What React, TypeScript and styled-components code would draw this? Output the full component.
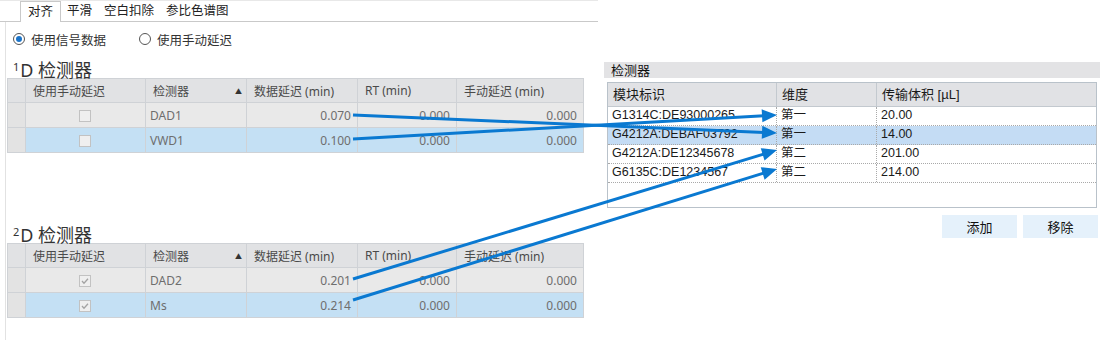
import styled, { createGlobalStyle } from 'styled-components';

const GlobalStyle = createGlobalStyle`
  html, body {
    margin: 0;
    padding: 0;
    background: #fff;
  }
  body {
    font-family: 'Noto Sans', 'Noto Sans CJK SC', sans-serif;
  }
`;

const Page = styled.div`
  position: relative;
  display: flex;
  width: 1100px;
  height: 340px;
  overflow: hidden;
  background: #fff;
`;

const LeftPanel = styled.div`
  width: 598px;
  display: flex;
  flex-direction: column;
`;

const TabStrip = styled.div`
  display: flex;
  align-items: flex-end;
  height: 22px;
  box-sizing: border-box;
  padding-left: 20px;
  border-top: 1px solid #e8e8e8;
  border-bottom: 1px solid #c9c9c9;
`;

const Tab = styled.div<{ $active?: boolean }>`
  box-sizing: border-box;
  height: 20px;
  padding: 0 6px;
  font-size: 12.5px;
  line-height: 19px;
  color: #222;
  white-space: nowrap;
  ${({ $active }) =>
    $active &&
    `
    height: 21px;
    margin-bottom: -1px;
    padding: 0 7px;
    background: #fff;
    border: 1px solid #c9c9c9;
    border-bottom: none;
  `}
`;

const Content = styled.div`
  flex: 1;
  margin-left: 5px;
  padding-left: 1px;
  border-left: 1px solid #e2e2e2;
`;

const RadioRow = styled.div`
  display: flex;
  align-items: center;
  height: 16px;
  margin-top: 9px;
  padding-left: 6px;
`;

const RadioItem = styled.label`
  display: flex;
  align-items: center;
  gap: 6px;
  width: 126px;
  font-size: 12.5px;
  color: #333;
  white-space: nowrap;
`;

const RadioDot = styled.span<{ $checked?: boolean }>`
  position: relative;
  box-sizing: border-box;
  width: 12px;
  height: 12px;
  border-radius: 50%;
  border: 1px solid #555;
  background: #fff;
  &::after {
    content: '';
    display: ${({ $checked }) => ($checked ? 'block' : 'none')};
    position: absolute;
    left: 2px;
    top: 2px;
    width: 6px;
    height: 6px;
    border-radius: 50%;
    background: #1b74c9;
  }
`;

const Heading = styled.div<{ $gap: number }>`
  height: 23px;
  margin-top: ${({ $gap }) => $gap}px;
  padding-left: 6px;
  font-size: 18px;
  line-height: 23px;
  color: #333;
  white-space: nowrap;
  sup {
    font-size: 11px;
    vertical-align: 6px;
    margin-right: 1px;
  }
`;

const DataTable = styled.table`
  border-collapse: collapse;
  table-layout: fixed;
  width: 576px;
  font-size: 12px;
`;

const HeadCell = styled.th`
  height: 23px;
  padding: 0 7px;
  text-align: left;
  font-weight: normal;
  color: #4a4a4a;
  background: #e1e2e4;
  border: 1px solid #cfd2d6;
  white-space: nowrap;
  position: relative;
`;

const SortMark = styled.span`
  position: absolute;
  right: 4px;
  top: 7px;
  font-size: 7px;
  color: #333;
`;

const Row = styled.tr<{ $selected?: boolean }>`
  background: ${({ $selected }) => ($selected ? '#c4e0f4' : '#e9e9e9')};
`;

const RowHeader = styled.td`
  background: #e3e3e3;
  border: 1px solid #cfd2d6;
`;

const Cell = styled.td<{ $align?: 'left' | 'right' | 'center' }>`
  height: 24px;
  padding: 0 6px 0 4px;
  text-align: ${({ $align }) => $align || 'left'};
  color: #6e6e6e;
  border: 1px solid #cfd2d6;
  white-space: nowrap;
`;

const Check = styled.span`
  display: inline-block;
  box-sizing: border-box;
  width: 12px;
  height: 12px;
  vertical-align: middle;
  border: 1px solid #c2c2c2;
  background: #efefef;
  svg {
    display: block;
  }
`;

const RightPanel = styled.div`
  flex: 1;
  padding: 62px 0 0 6px;
  display: flex;
  flex-direction: column;
`;

const GroupBar = styled.div`
  height: 16px;
  padding-left: 7px;
  background: #e3e3e5;
  font-size: 13px;
  line-height: 16px;
  color: #111;
`;

const GridBox = styled.div`
  box-sizing: border-box;
  height: 126px;
  margin: 4px 3px 0 3px;
  border: 1px solid #b9c2ca;
  background: #fff;
`;

const GridRow = styled.div<{ $head?: boolean; $selected?: boolean }>`
  display: grid;
  grid-template-columns: 169px 100px 1fr;
  height: ${({ $head }) => ($head ? 24 : 19)}px;
  background: ${({ $head, $selected }) =>
    $head ? '#e1e2e5' : $selected ? '#c4dcf4' : '#fff'};
  border-bottom: 1px ${({ $head }) => ($head ? 'solid #c3c9cf' : 'dotted #a9a9a9')};
  box-sizing: border-box;
`;

const GridCell = styled.div<{ $head?: boolean }>`
  padding-left: ${({ $head }) => ($head ? 5 : 4)}px;
  font-family: 'Liberation Sans', 'Noto Sans CJK SC', sans-serif;
  font-size: ${({ $head }) => ($head ? 13 : 12.5)}px;
  line-height: ${({ $head }) => ($head ? 24 : 17)}px;
  color: #1a1a1a;
  white-space: nowrap;
  overflow: hidden;
  border-right: 1px ${({ $head }) => ($head ? 'solid #c3c9cf' : 'dotted #a9a9a9')};
  &:last-child {
    border-right: none;
  }
`;

const ButtonRow = styled.div`
  display: flex;
  justify-content: flex-end;
  gap: 6px;
  margin-top: 7px;
  padding-right: 2px;
`;

const FlatButton = styled.button`
  width: 75px;
  height: 23px;
  border: none;
  background: #e5f1fb;
  font-family: 'Liberation Sans', 'Noto Sans CJK SC', sans-serif;
  font-size: 13px;
  color: #111;
`;

const Overlay = styled.svg`
  position: absolute;
  left: 0;
  top: 0;
  pointer-events: none;
`;

const cols = [18, 120, 101, 111, 99, 127];

type Det = { name: string; delay: string; checked: boolean };

const table1: Det[] = [
  { name: 'DAD1', delay: '0.070', checked: false },
  { name: 'VWD1', delay: '0.100', checked: false },
];
const table2: Det[] = [
  { name: 'DAD2', delay: '0.201', checked: true },
  { name: 'Ms', delay: '0.214', checked: true },
];

const modules = [
  { id: 'G1314C:DE93000265', dim: '第一', vol: '20.00' },
  { id: 'G4212A:DEBAF03792', dim: '第一', vol: '14.00' },
  { id: 'G4212A:DE12345678', dim: '第二', vol: '201.00' },
  { id: 'G6135C:DE1234567', dim: '第二', vol: '214.00' },
];

const arrows = [
  [353, 115, 777, 133],
  [353, 139, 777, 115],
  [353, 279, 777, 150],
  [353, 300, 777, 169],
];

const Box = ({ checked }: { checked: boolean }) => (
  <Check>
    {checked && (
      <svg width="10" height="10" viewBox="0 0 10 10">
        <polyline points="2,5 4,7.2 8,2.8" fill="none" stroke="#a3a3a3" strokeWidth="1.3" />
      </svg>
    )}
  </Check>
);

const DetectorTable = ({ rows }: { rows: Det[] }) => (
  <DataTable>
    <colgroup>
      {cols.map((w, i) => (
        <col key={i} style={{ width: w }} />
      ))}
    </colgroup>
    <thead>
      <tr>
        <HeadCell />
        <HeadCell>使用手动延迟</HeadCell>
        <HeadCell>
          检测器<SortMark>▲</SortMark>
        </HeadCell>
        <HeadCell>数据延迟 (min)</HeadCell>
        <HeadCell>RT (min)</HeadCell>
        <HeadCell>手动延迟 (min)</HeadCell>
      </tr>
    </thead>
    <tbody>
      {rows.map((r, i) => (
        <Row key={r.name} $selected={i === 1}>
          <RowHeader />
          <Cell $align="center">
            <Box checked={r.checked} />
          </Cell>
          <Cell>{r.name}</Cell>
          <Cell $align="right">{r.delay}</Cell>
          <Cell $align="right">0.000</Cell>
          <Cell $align="right">0.000</Cell>
        </Row>
      ))}
    </tbody>
  </DataTable>
);

const Arrow = ({ x1, y1, x2, y2 }: { x1: number; y1: number; x2: number; y2: number }) => {
  const dx = x2 - x1;
  const dy = y2 - y1;
  const len = Math.hypot(dx, dy);
  const ux = dx / len;
  const uy = dy / len;
  const head = 15;
  const half = 6.5;
  const bx = x2 - ux * head;
  const by = y2 - uy * head;
  const pts = [
    [x2, y2],
    [bx - uy * half, by + ux * half],
    [bx + uy * half, by - ux * half],
  ]
    .map((p) => p.join(','))
    .join(' ');
  return (
    <g>
      <line x1={x1} y1={y1} x2={bx + ux * 2} y2={by + uy * 2} stroke="#0a79d1" strokeWidth="3" />
      <polygon points={pts} fill="#0a79d1" />
    </g>
  );
};

const App = () => (
  <>
    <GlobalStyle />
    <Page>
      <LeftPanel>
        <TabStrip>
          <Tab $active>对齐</Tab>
          <Tab>平滑</Tab>
          <Tab>空白扣除</Tab>
          <Tab>参比色谱图</Tab>
        </TabStrip>
        <Content>
          <RadioRow>
            <RadioItem>
              <RadioDot $checked />
              使用信号数据
            </RadioItem>
            <RadioItem>
              <RadioDot />
              使用手动延迟
            </RadioItem>
          </RadioRow>
          <Heading $gap={8}>
            <sup>1</sup>D 检测器
          </Heading>
          <DetectorTable rows={table1} />
          <Heading $gap={67}>
            <sup>2</sup>D 检测器
          </Heading>
          <DetectorTable rows={table2} />
        </Content>
      </LeftPanel>
      <RightPanel>
        <GroupBar>检测器</GroupBar>
        <GridBox>
          <GridRow $head>
            <GridCell $head>模块标识</GridCell>
            <GridCell $head>维度</GridCell>
            <GridCell $head>传输体积 [µL]</GridCell>
          </GridRow>
          {modules.map((m, i) => (
            <GridRow key={m.id} $selected={i === 1}>
              <GridCell>{m.id}</GridCell>
              <GridCell>{m.dim}</GridCell>
              <GridCell>{m.vol}</GridCell>
            </GridRow>
          ))}
        </GridBox>
        <ButtonRow>
          <FlatButton>添加</FlatButton>
          <FlatButton>移除</FlatButton>
        </ButtonRow>
      </RightPanel>
      <Overlay width="1100" height="340">
        {arrows.map(([x1, y1, x2, y2], i) => (
          <Arrow key={i} x1={x1} y1={y1} x2={x2} y2={y2} />
        ))}
      </Overlay>
    </Page>
  </>
);

export default App;
